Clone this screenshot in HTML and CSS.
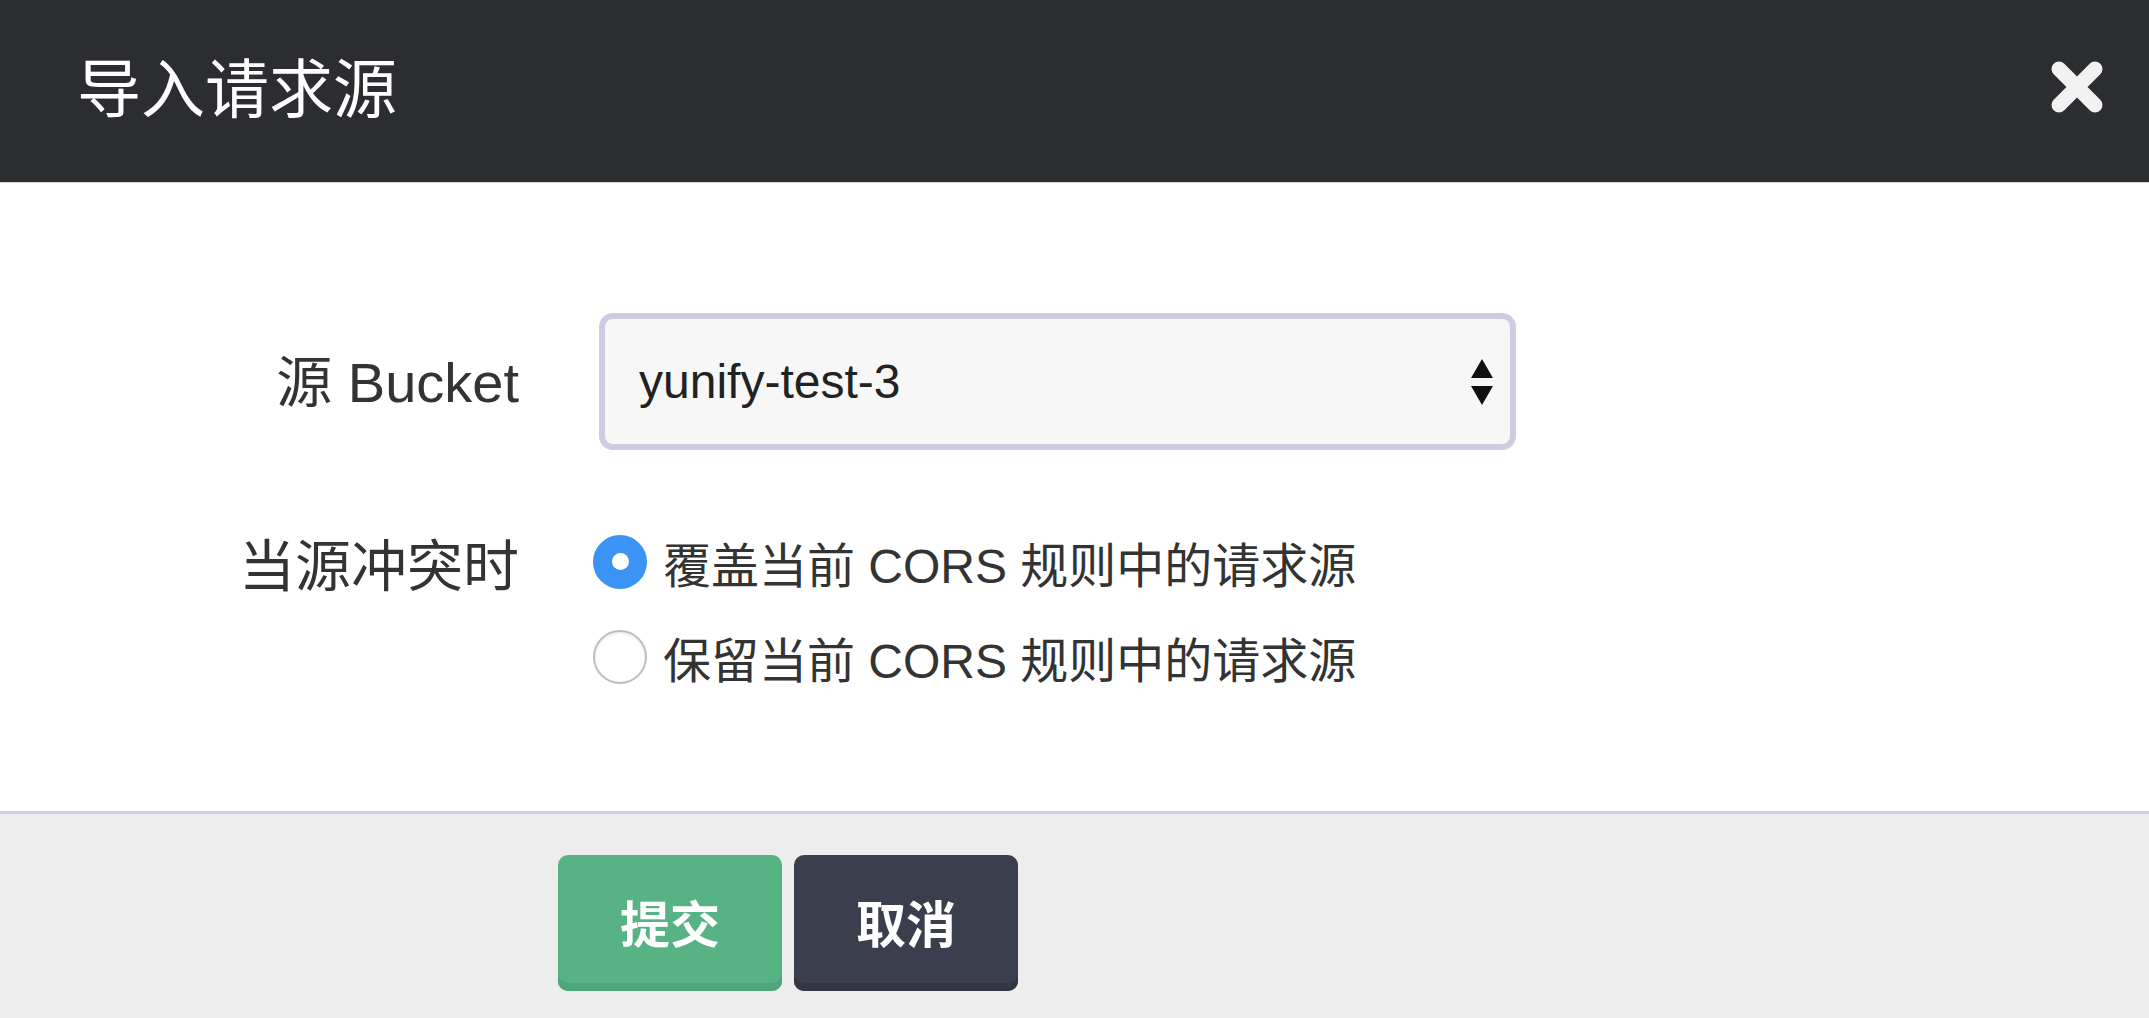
FILE: index.html
```html
<!DOCTYPE html>
<html lang="zh-CN">
<head>
<meta charset="utf-8">
<title>导入请求源</title>
<link rel="stylesheet" href="styles.css">
</head>
<body>
<div class="dialog">
  <header class="hd">
    <h1 class="hd-title">导入请求源</h1>
    <button class="close" type="button" aria-label="close">
      <svg width="56" height="56" viewBox="0 0 56 56"><path d="M10 10 L46 46 M46 10 L10 46" stroke="#f2f2f2" stroke-width="15" stroke-linecap="round" fill="none"/></svg>
    </button>
  </header>
  <main class="bd">
    <div class="row">
      <div class="lbl lbl-select">源 Bucket</div>
      <div class="select">
        <span class="select-val">yunify-test-3</span>
        <svg class="select-arrows" width="24" height="48" viewBox="0 0 24 48"><path d="M12 1 L23 20 L1 20 Z M1 28 L23 28 L12 47 Z" fill="#111"/></svg>
      </div>
    </div>
    <div class="row row-radio">
      <div class="lbl lbl-radio">当源冲突时</div>
      <div class="radios">
        <div class="radio"><span class="dot dot-on"></span><span>覆盖当前 CORS 规则中的请求源</span></div>
        <div class="radio"><span class="dot"></span><span>保留当前 CORS 规则中的请求源</span></div>
      </div>
    </div>
  </main>
  <footer class="ft">
    <button class="btn btn-ok" type="button">提交</button>
    <button class="btn btn-cancel" type="button">取消</button>
  </footer>
</div>
</body>
</html>
```

FILE: styles.css
```css
* { box-sizing: border-box; }
html, body {
  margin: 0;
  padding: 0;
  width: 2149px;
  height: 1018px;
  overflow: hidden;
  background: #ffffff;
  font-family: "Liberation Sans", "Noto Sans CJK SC", sans-serif;
  color: #333333;
}
.dialog {
  display: flex;
  flex-direction: column;
  height: 1018px;
}
.hd {
  height: 183px;
  background: #2c2d30;
  border-bottom: 1px solid #d8d8d8;
  display: flex;
  align-items: center;
  justify-content: space-between;
  padding: 0 44px 2px 77px;
}
.hd-title {
  margin: 0;
  font-size: 64px;
  font-weight: normal;
  color: #ffffff;
  line-height: 1;
}
.close {
  background: none;
  border: 0;
  padding: 0;
  margin: 0 0 6px 0;
  width: 56px;
  height: 56px;
  display: flex;
}
.bd {
  height: 628px;
  padding-top: 130px;
  display: flex;
  flex-direction: column;
  gap: 64px;
}
.row {
  display: grid;
  grid-template-columns: 519px 1fr;
  column-gap: 80px;
  align-items: center;
}
.row-radio { align-items: start; }
.lbl {
  text-align: right;
  font-size: 56px;
  color: #333333;
  white-space: nowrap;
}
.lbl-select {
  padding-bottom: 8px;
}
.lbl-radio {
  line-height: 95px;
  padding-top: 5px;
}
.select {
  width: 917px;
  height: 137px;
  border: 6px solid #cecce0;
  border-radius: 14px;
  background: #f7f7f7;
  display: flex;
  align-items: center;
  justify-content: space-between;
  padding: 0 16px 0 34px;
}
.select-val {
  font-size: 48px;
  color: #222222;
}
.radios {
  display: flex;
  flex-direction: column;
  margin-left: -6px;
}
.radio {
  display: flex;
  align-items: center;
  height: 95px;
  font-size: 48px;
  color: #333333;
  gap: 16px;
  white-space: nowrap;
}
.dot {
  width: 54px;
  height: 54px;
  border-radius: 50%;
  background: #ffffff;
  border: 2px solid #bdbdbd;
  box-shadow: inset 0 1px 3px rgba(0,0,0,0.1);
  display: flex;
  align-items: center;
  justify-content: center;
  flex: none;
}
.dot-on {
  background: #3b93f5;
  border-color: #3b93f5;
  box-shadow: none;
}
.dot-on::after {
  content: "";
  width: 17px;
  height: 17px;
  border-radius: 50%;
  background: #ffffff;
}
.ft {
  flex: 1;
  background: #ededed;
  border-top: 3px solid #d2d0e0;
  padding: 41px 0 0 558px;
  display: flex;
  align-items: flex-start;
  gap: 12px;
}
.btn {
  width: 224px;
  height: 136px;
  border: 0;
  border-radius: 10px;
  font-family: "Liberation Sans", "Noto Sans CJK SC", sans-serif;
  font-size: 50px;
  font-weight: bold;
  color: #ffffff;
  padding: 0 0 4px 0;
  margin: 0;
}
.btn-ok {
  background: #57b383;
  box-shadow: inset 0 -8px 0 #4fa678;
}
.btn-cancel {
  background: #3b3e4d;
  box-shadow: inset 0 -8px 0 #343743;
}
```
